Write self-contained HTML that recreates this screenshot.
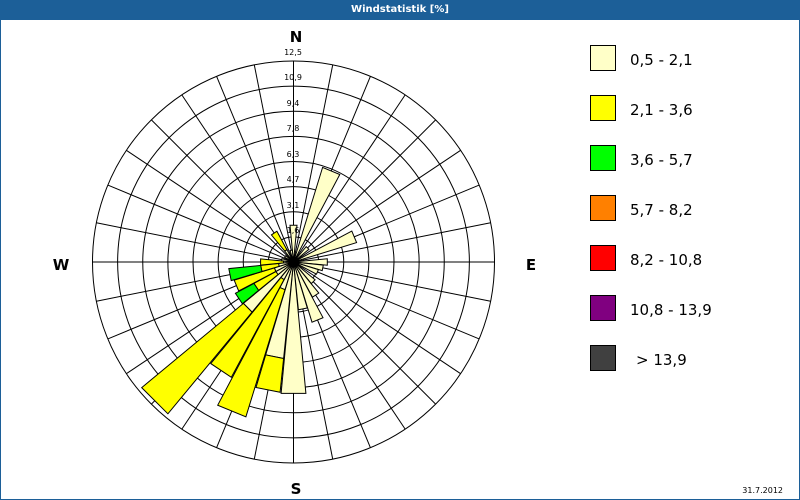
<!DOCTYPE html>
<html><head><meta charset="utf-8"><style>
html,body{margin:0;padding:0;width:800px;height:500px;overflow:hidden;background:#fff;font-family:"DejaVu Sans","Liberation Sans",sans-serif}
#t{position:absolute;left:0;top:0;width:800px;height:20px;background:#1c5f98;color:#fff;font:bold 10px "DejaVu Sans",sans-serif;text-align:center;line-height:20px}
#f{position:absolute;left:0;top:20px;width:798px;height:479px;border:1px solid #1c5f98;border-top:none}
</style></head><body>
<div id="t">Windstatistik [%]</div>
<div id="f"></div>
<svg id="s" width="800" height="500" style="position:absolute;left:0;top:0" font-family="DejaVu Sans, sans-serif">
<g id="grid" stroke="#000" stroke-width="1" fill="none"></g>
<g id="bars"></g>
<g id="top"></g>
<g font-size="8" text-anchor="middle" fill="#000">
<text x="293" y="55">12,5</text><text x="293" y="80">10,9</text><text x="293" y="106">9,4</text>
<text x="293" y="131">7,8</text><text x="293" y="157">6,3</text><text x="293" y="182">4,7</text>
<text x="293" y="208">3,1</text><text x="293" y="233">1,6</text>
</g>
<g font-size="15" font-weight="bold" text-anchor="middle">
<text x="296" y="42">N</text><text x="296" y="494">S</text><text x="61" y="270">W</text><text x="531" y="270">E</text>
</g>
<g stroke="#000" stroke-width="1">
<rect x="590.5" y="45.5" width="25" height="25" fill="#ffffc8"/>
<rect x="590.5" y="95.5" width="25" height="25" fill="#ffff00"/>
<rect x="590.5" y="145.5" width="25" height="25" fill="#00ff00"/>
<rect x="590.5" y="195.5" width="25" height="25" fill="#ff8000"/>
<rect x="590.5" y="245.5" width="25" height="25" fill="#ff0000"/>
<rect x="590.5" y="295.5" width="25" height="25" fill="#800080"/>
<rect x="590.5" y="345.5" width="25" height="25" fill="#404040"/>
</g>
<g font-size="15" fill="#000">
<text x="630" y="65">0,5 - 2,1</text><text x="630" y="115">2,1 - 3,6</text>
<text x="630" y="165">3,6 - 5,7</text><text x="630" y="215">5,7 - 8,2</text>
<text x="630" y="265">8,2 - 10,8</text><text x="630" y="315">10,8 - 13,9</text>
<text x="636" y="365">&gt; 13,9</text>
</g>
<text x="783" y="493" font-size="8" text-anchor="end">31.7.2012</text>
</svg>
<script>
var cx=293.5,cy=262,R=201,ns="http://www.w3.org/2000/svg";
var g=document.getElementById('grid'),b=document.getElementById('bars');
function el(p,a,t){var e=document.createElementNS(ns,t);for(var k in a)e.setAttribute(k,a[k]);p.appendChild(e);return e}
for(var k=1;k<=8;k++)el(g,{cx:cx,cy:cy,r:R/8*k},'circle');
for(var a=0;a<360;a+=11.25){var r=a*Math.PI/180;el(g,{x1:cx,y1:cy,x2:cx+R*Math.sin(r),y2:cy-R*Math.cos(r)},'line');}
function pt(ang,r){var t=ang*Math.PI/180;return (cx+r*Math.sin(t)).toFixed(1)+','+(cy-r*Math.cos(t)).toFixed(1)}
function wedge(ang,r0,r1,col){var h=5.4;var d='M'+pt(ang-h,r0)+'L'+pt(ang-h,r1)+'L'+pt(ang+h,r1)+'L'+pt(ang+h,r0)+'Z';
el(b,{d:d,fill:col,stroke:'#000','stroke-width':1},'path')}
var P='#ffffc8',Y='#ffff00',G='#00ff00';
var data=[[0,[[37,P]]],[22.5,[[99,P]]],[45,[[20,P]]],[67.5,[[66,P]]],[90,[[34,P]]],[101.25,[[30,P]]],[112.5,[[26,P]]],[135,[[28,P]]],
[146.25,[[40,P]]],[157.5,[[63,P]]],[168.75,[[48,P]]],[180,[[132,P]]],
[191.25,[[97,P],[131,Y]]],[202.5,[[29,P],[162,Y]]],[213.75,[[20,P],[131,Y]]],[225,[[65,P],[197,Y]]],[236.25,[[20,P],[45,Y],[66,G]]],
[247.5,[[20,P],[62,Y]]],[258.75,[[15,P],[33,Y],[65,G]]],[270,[[10,P],[33,Y]]],[281.25,[[12,P]]],[326.25,[[14,P],[35,Y]]],[303.75,[[10,P]]],[348.75,[[12,P]]]];
data.forEach(function(d){var r0=0;d[1].forEach(function(s){wedge(d[0],r0,s[0],s[1]);r0=s[0]})});
el(document.getElementById('top'),{cx:cx,cy:cy,r:5,fill:'#000'},'circle');
</script>
</body></html>
